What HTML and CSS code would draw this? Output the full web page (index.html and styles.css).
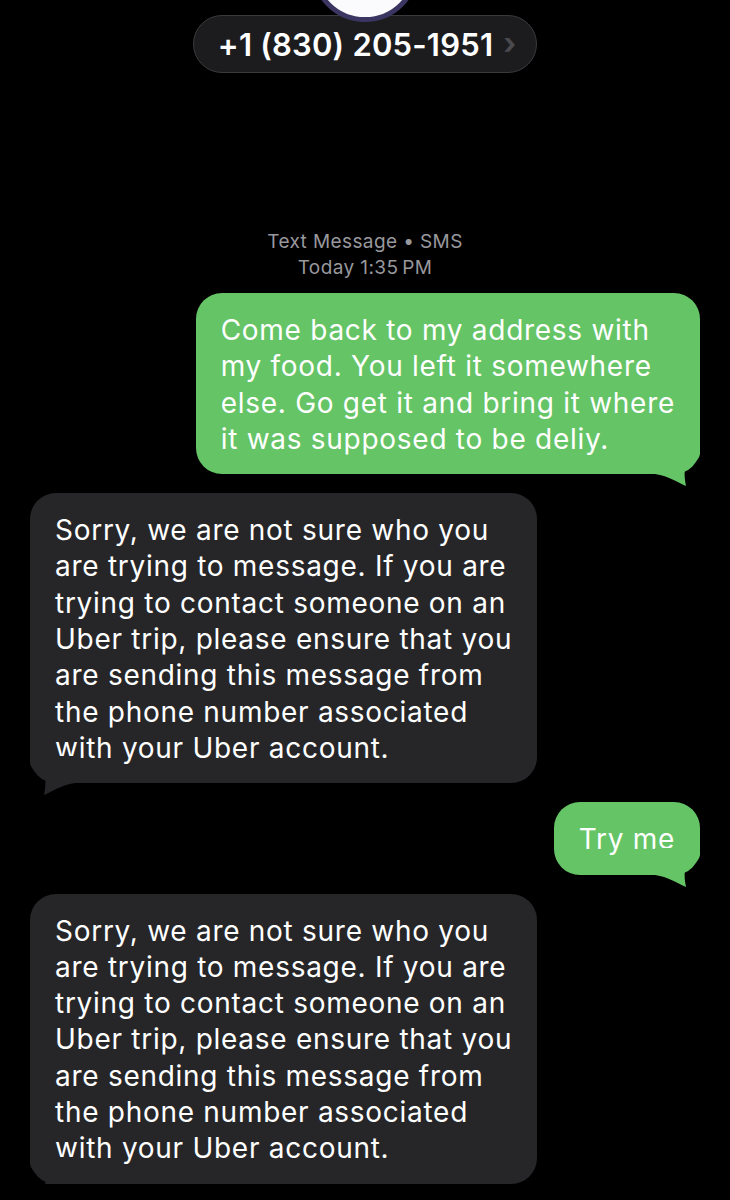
FILE: index.html
```html
<!DOCTYPE html>
<html lang="en">
<head>
  <meta charset="UTF-8">
  <meta name="viewport" content="width=device-width, initial-scale=1.0">
  <title>+1 (830) 205-1951</title>
  <link rel="stylesheet" href="styles.css">
</head>
<body>
  <header class="contact">
    <div class="avatar"></div>
    <div class="contact-pill">
      <span class="contact-number">+1 (830) 205-1951</span>
      <span class="chevron">&#x203A;</span>
    </div>
  </header>

  <main class="thread">
    <div class="stamp">
      <div>Text Message &bull; SMS</div>
      <div>Today 1:35&#8239;PM</div>
    </div>

    <div class="row row-sent">
      <div class="bubble sent">
        Come back to my address with<br>
        my food. You left it somewhere<br>
        else. Go get it and bring it where<br>
        it was supposed to be deliy.
        <svg class="tail" viewBox="0 0 45 40"><path d="M45 0 L45 7 C44 14 36 18 30 22 C29 28 30 34 31 39 C24 36 14 29 0 27 L0 0 Z"/></svg>
      </div>
    </div>

    <div class="row row-received">
      <div class="bubble received">
        Sorry, we are not sure who you<br>
        are trying to message. If you are<br>
        trying to contact someone on an<br>
        Uber trip, please ensure that you<br>
        are sending this message from<br>
        the phone number associated<br>
        with your Uber account.
        <svg class="tail" viewBox="0 0 45 40"><path d="M45 0 L45 7 C44 14 36 18 30 22 C29 28 30 34 31 39 C24 36 14 29 0 27 L0 0 Z"/></svg>
      </div>
    </div>

    <div class="row row-sent">
      <div class="bubble sent">
        Try me
        <svg class="tail" viewBox="0 0 45 40"><path d="M45 0 L45 7 C44 14 36 18 30 22 C29 28 30 34 31 39 C24 36 14 29 0 27 L0 0 Z"/></svg>
      </div>
    </div>

    <div class="row row-received">
      <div class="bubble received">
        Sorry, we are not sure who you<br>
        are trying to message. If you are<br>
        trying to contact someone on an<br>
        Uber trip, please ensure that you<br>
        are sending this message from<br>
        the phone number associated<br>
        with your Uber account.
        <svg class="tail" viewBox="0 0 45 40"><path d="M45 0 L45 7 C44 14 36 18 30 22 C29 28 30 34 31 39 C24 36 14 29 0 27 L0 0 Z"/></svg>
      </div>
    </div>
  </main>
</body>
</html>
```

FILE: styles.css
```css
body {
  margin: 0;
  background-color: #000;
  font-family: Inter, "Noto Sans", sans-serif;
  color: #fff;
  overflow: hidden;
}
.contact {
  position: relative;
  display: flex;
  justify-content: center;
  padding-top: 15px;
}
.avatar {
  position: absolute;
  left: 50%;
  top: -86px;
  width: 98px;
  height: 98px;
  margin-left: -54px;
  border: 5px solid #3b3562;
  border-radius: 50%;
  background: #fbfbfd;
  z-index: 2;
}
.contact-pill {
  display: flex;
  align-items: center;
  gap: 10px;
  height: 56px;
  padding: 0 20px 0 24px;
  border: 1px solid #3a3a3c;
  border-radius: 30px;
  background: #1c1c1e;
}
.contact-number {
  font-size: 31px;
  font-weight: 600;
  letter-spacing: 0.2px;
}
.chevron {
  color: #4a4a4e;
  font-size: 30px;
  font-weight: 700;
  line-height: 1;
  margin-top: -3px;
}
.thread {
  display: flex;
  flex-direction: column;
  padding: 0 30px;
}
.stamp {
  margin-top: 156px;
  text-align: center;
  font-size: 19px;
  line-height: 26px;
  letter-spacing: 0.4px;
  color: #98989d;
}
.row {
  display: flex;
  margin-top: 19px;
}
.row-sent {
  justify-content: flex-end;
}
.stamp + .row {
  margin-top: 12px;
}
.bubble {
  position: relative;
  padding: 19px 25px 17px 25px;
  border-radius: 26px;
  font-size: 28px;
  line-height: 36.3px;
  letter-spacing: 0.72px;
  white-space: nowrap;
}
.sent {
  background: #65c466;
}
.received {
  background: #262629;
}
.tail {
  position: absolute;
  bottom: -13px;
  width: 45px;
  height: 40px;
}
.sent .tail {
  right: 0;
  fill: #65c466;
}
.received .tail {
  left: 0;
  fill: #262629;
  transform: scaleX(-1);
}
```
